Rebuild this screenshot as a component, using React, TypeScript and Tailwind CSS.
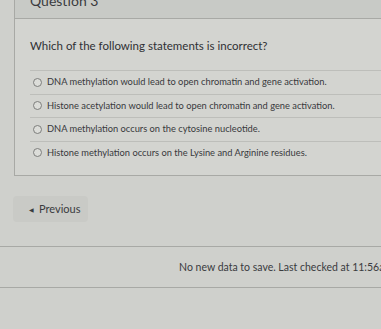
import React from "react";

const options = [
  "DNA methylation would lead to open chromatin and gene activation.",
  "Histone acetylation would lead to open chromatin and gene activation.",
  "DNA methylation occurs on the cytosine nucleotide.",
  "Histone methylation occurs on the Lysine and Arginine residues.",
];

const App = () => {
  return (
    <div
      className="w-[381px] h-[329px] overflow-hidden bg-[#cfd0cc] text-[#35363a]"
      style={{ fontFamily: "Lato, 'Open Sans', sans-serif" }}
    >
      {/* question panel */}
      <div className="ml-[14px] w-[380px] border-l border-b border-[#a8a9a5] bg-[#d3d4d0]">
        <div className="h-[19px] overflow-hidden border-b border-[#a8a9a5] bg-[#c8cac6] pl-[15px]">
          <div className="-mt-[8px] text-[14px] leading-[18px] text-[#3a3b3e]">Question 3</div>
        </div>
        <div className="pl-[15px] pt-[20px] pb-[11px]">
          <p className="text-[11.5px] leading-[14px] text-[#2f3034]">
            Which of the following statements is incorrect?
          </p>
          <div className="mt-[17px]">
            {options.map((opt) => (
              <div
                key={opt}
                className="flex h-[23.5px] items-center border-t border-[#bdbeba] pl-[3px]"
              >
                <span className="h-[9px] w-[9px] rounded-full border border-[#7d7e7c] bg-[#dcddd9]" />
                <span className="ml-[5px] text-[9.3px] text-[#38393c]">{opt}</span>
              </div>
            ))}
          </div>
        </div>
      </div>

      {/* nav */}
      <div className="pl-[13px] pt-[20px]">
        <button className="flex h-[26px] w-[75px] items-center rounded-sm bg-[#c9cac6] pl-[16px] text-[11px] text-[#3a3b3e]">
          <span className="mr-[5px] text-[6px]">◀</span>
          Previous
        </button>
      </div>

      {/* autosave status */}
      <div className="mt-[24px] flex h-[42px] items-center justify-end border-y border-[#a8a9a5] whitespace-nowrap">
        <span className="-mr-[12px] mt-[2px] text-[10.5px] text-[#3a3b3e]">
          No new data to save. Last checked at 11:56am
        </span>
      </div>
    </div>
  );
};

export default App;
